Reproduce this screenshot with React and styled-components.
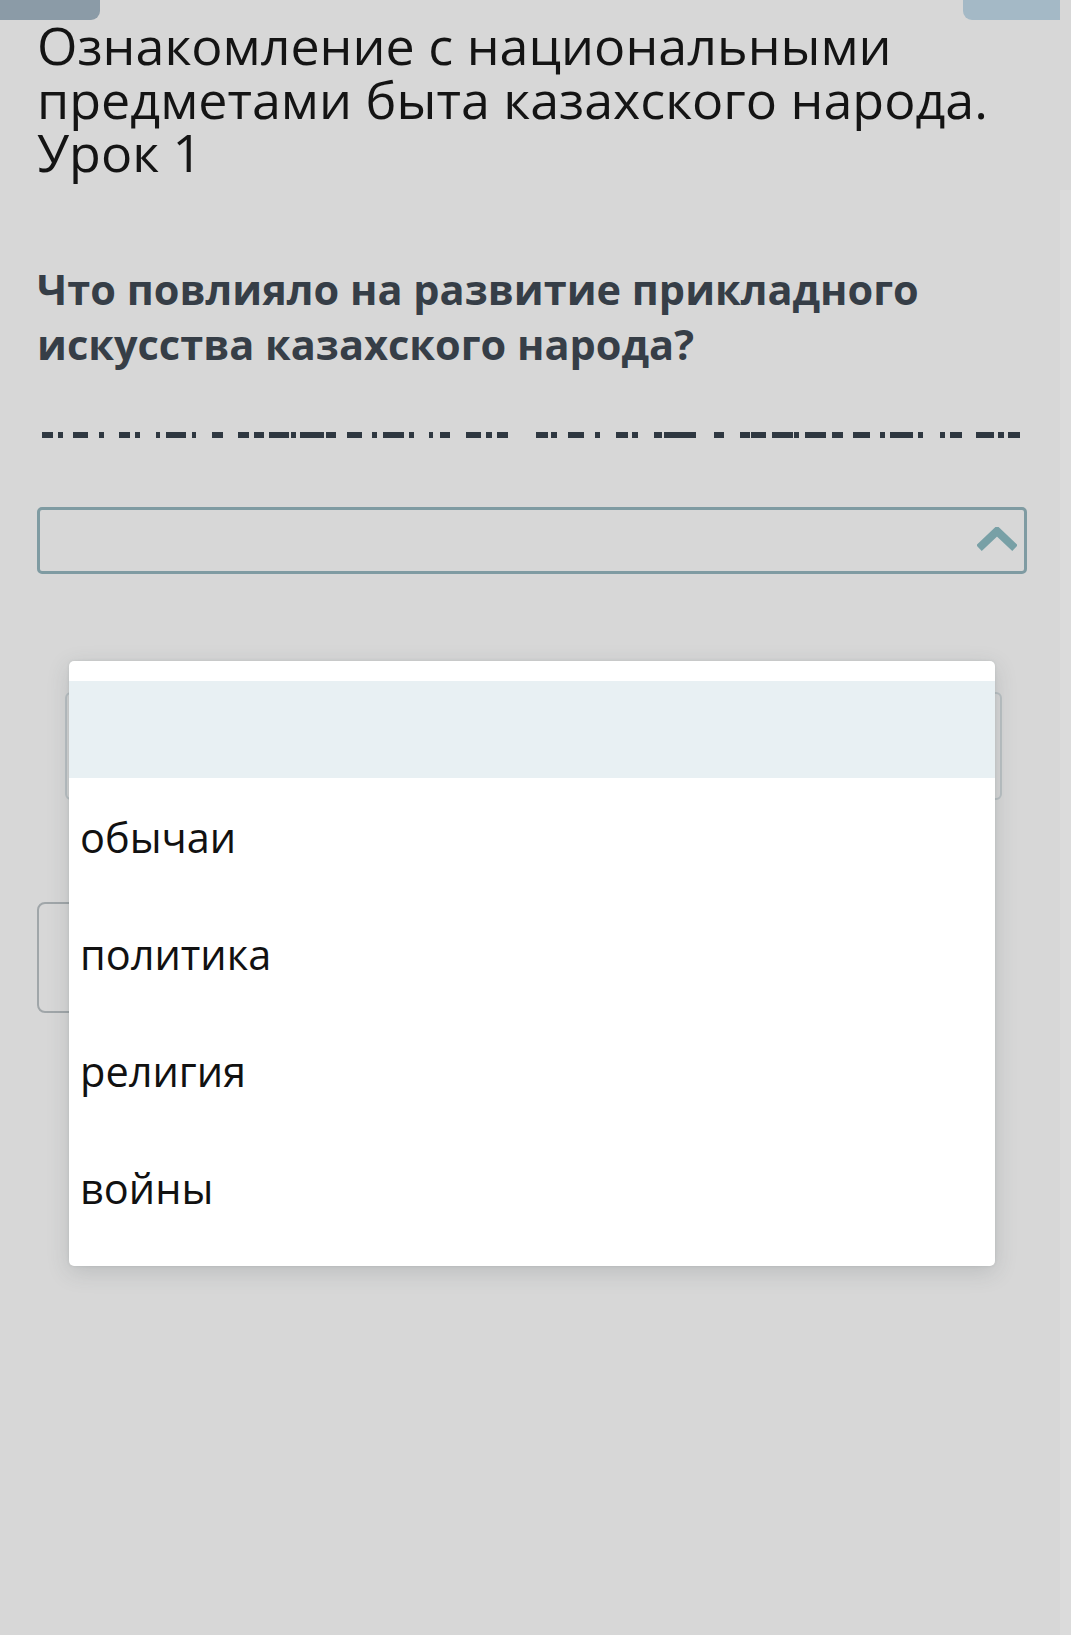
import React from "react";
import styled, { createGlobalStyle } from "styled-components";

const GlobalStyle = createGlobalStyle`
  html, body {
    margin: 0;
    padding: 0;
    background: #d7d7d7;
    font-family: "Open Sans", "Noto Sans", sans-serif;
  }
  * { box-sizing: border-box; }
`;

const Page = styled.div`
  position: relative;
  display: flex;
  width: 1071px;
  min-height: 1635px;
  overflow: hidden;
  background: #d7d7d7;
`;

const Main = styled.div`
  flex: 1;
  display: flex;
  flex-direction: column;
`;

const ScrollTrack = styled.div`
  width: 11px;
  margin-top: 190px;
  background: #dbdbdb;
`;

const TopBar = styled.div`
  display: flex;
  justify-content: space-between;
  height: 20px;
`;

const Tab = styled.div`
  width: ${(p) => (p.$side === "left" ? "100px" : "97px")};
  height: 20px;
  background: ${(p) => (p.$side === "left" ? "#8b9ba7" : "#a4b9c6")};
  border-radius: ${(p) => (p.$side === "left" ? "0 0 9px 0" : "0 0 0 9px")};
`;

const Content = styled.div`
  display: flex;
  flex-direction: column;
  padding: 0 33px 0 37px;
`;

const Title = styled.h1`
  margin: -2px 0 0 0;
  font-size: 52px;
  line-height: 53.5px;
  font-weight: 400;
  color: #141414;
`;

const Question = styled.h2`
  margin: 83px 0 0 0;
  font-size: 41.5px;
  line-height: 55px;
  font-weight: 700;
  color: #363e47;
`;

const Blanks = styled.svg`
  display: block;
  margin: 60px 0 0 5px;
  width: 980px;
  height: 6px;
`;

const Select = styled.div`
  display: flex;
  align-items: center;
  justify-content: flex-end;
  margin-top: 69px;
  height: 67px;
  padding-right: 7px;
  border: 3px solid #7f9ba2;
  border-radius: 5px;
`;

const Placeholder = styled.div`
  margin: 118px 25px 0 28px;
  height: 108px;
  border: 2px solid #b9c0c3;
  border-radius: 6px;
`;

const GhostButton = styled.div`
  margin-top: 102px;
  width: 320px;
  height: 111px;
  border: 2px solid #a0a6a9;
  border-radius: 8px;
`;

const Dropdown = styled.ul`
  position: absolute;
  left: 69px;
  top: 661px;
  width: 926px;
  margin: 0;
  padding: 20px 0 20px;
  list-style: none;
  background: #ffffff;
  border-radius: 5px;
  box-shadow: 0 6px 22px rgba(60, 70, 75, 0.18), 0 0 3px rgba(60, 70, 75, 0.12);
`;

const Option = styled.li`
  display: flex;
  align-items: center;
  height: ${(p) => (p.$active ? "97px" : "117px")};
  padding: 0 11px;
  background: ${(p) => (p.$active ? "#e8f0f3" : "transparent")};
  font-size: 41.5px;
  color: #111111;
`;

// positions of the dark blocks in the blanked line, in px from its start
const blankRuns = [
  [0, 11], [16, 21], [31, 46], [57, 62], [77, 88], [93, 98], [114, 118],
  [124, 144], [150, 154], [170, 181], [196, 207], [212, 222], [227, 247],
  [249, 254], [258, 282], [284, 294], [305, 320], [330, 335], [341, 362],
  [367, 372], [387, 391], [398, 408], [424, 439], [444, 450], [455, 466],
  [494, 506], [509, 515], [526, 542], [553, 558], [574, 586], [590, 596],
  [612, 620], [622, 654], [672, 682], [698, 708], [709, 724], [730, 751],
  [752, 757], [763, 784], [790, 801], [811, 828], [838, 843], [848, 871],
  [876, 881], [898, 903], [908, 920], [934, 952], [956, 962], [966, 978],
];

const ChevronUp = () => (
  <svg width="40" height="26" viewBox="0 0 40 26">
    <path d="M2 21 L20 4 L38 21" fill="none" stroke="#78a0a6" strokeWidth="8" strokeLinejoin="miter" />
  </svg>
);

const options = ["", "обычаи", "политика", "религия", "войны"];

export default function App() {
  return (
    <>
      <GlobalStyle />
      <Page>
        <Main>
          <TopBar>
            <Tab $side="left" />
            <Tab $side="right" />
          </TopBar>
          <Content>
            <Title>
              Ознакомление с национальными предметами быта казахского народа.
              Урок 1
            </Title>
            <Question>
              Что повлияло на развитие прикладного искусства казахского народа?
            </Question>
            <Blanks viewBox="0 0 980 6">
              {blankRuns.map(([a, b]) => (
                <rect key={a} x={a} y="0" width={b - a} height="6" fill="#2f3841" />
              ))}
            </Blanks>
            <Select>
              <ChevronUp />
            </Select>
            <Placeholder />
            <GhostButton />
          </Content>
        </Main>
        <ScrollTrack />
        <Dropdown>
          {options.map((o, i) => (
            <Option key={i} $active={i === 0}>
              {o}
            </Option>
          ))}
        </Dropdown>
      </Page>
    </>
  );
}
